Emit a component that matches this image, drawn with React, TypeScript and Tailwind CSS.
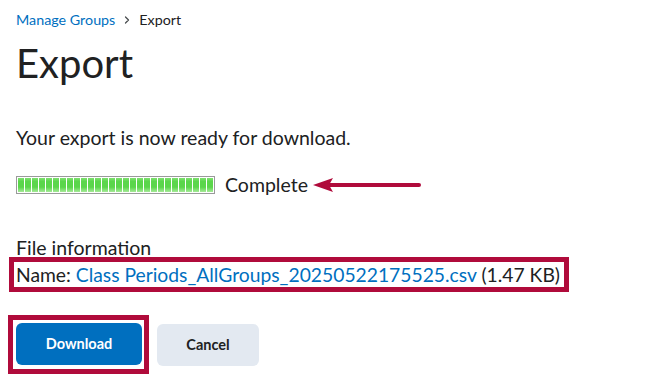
import { ChevronRight } from 'lucide-react';

const SEGMENTS = Array.from({ length: 28 });

function ProgressBar() {
  return (
    <div className="flex h-[18px] w-[199px] gap-[1px] border border-[#9a9a9a] bg-white p-[1px]">
      {SEGMENTS.map((_, i) => (
        <div
          key={i}
          className="h-full w-[6px] bg-[linear-gradient(#7fe070,#5bd64b_25%,#5bd64b_65%,#a6ea98)]"
        />
      ))}
    </div>
  );
}

function Arrow() {
  return (
    <svg width="110" height="16" viewBox="0 0 110 16" className="block">
      <line x1="14" y1="8" x2="106" y2="8" stroke="#b00b3b" strokeWidth="4" strokeLinecap="round" />
      <polygon points="0,8 20,1 16,8 20,15" fill="#b00b3b" />
    </svg>
  );
}

export default function App() {
  return (
    <div className="min-h-[390px] w-[656px] bg-white pl-4 font-['Lato',sans-serif] text-[#202122]">
      <nav className="flex items-center pt-[11px] text-[14.3px] leading-[18px]">
        <a className="text-[#006fbf]">Manage Groups</a>
        <ChevronRight className="mx-[6px] h-[12px] w-[12px] text-[#494c4e]" strokeWidth={2.5} />
        <span>Export</span>
      </nav>

      <h1 className="mt-[10px] text-[40px] leading-[48px] font-normal">Export</h1>

      <p className="mt-[39px] text-[19.5px] leading-[24px]">Your export is now ready for download.</p>

      <div className="mt-[23px] flex items-center">
        <ProgressBar />
        <span className="ml-[10px] text-[19.5px] leading-[24px]">Complete</span>
        <span className="ml-[5px]">
          <Arrow />
        </span>
      </div>

      <div className="mt-[39px] text-[19.5px] leading-[24px]">File information</div>
      <div className="-ml-[7px] -mt-[3px] inline-block border-[5px] border-[#b00b3b] pr-[4px] pl-[2px] text-[19.3px] leading-[25px]">
        Name: <a className="text-[#006fbf]">Class Periods_AllGroups_20250522175525.csv</a> (1.47 KB)
      </div>

      <div className="mt-[23px] flex items-center">
        <div className="-ml-[8px] border-[5px] border-[#b00b3b] pt-[3px] pr-[2px] pb-[4px] pl-[3px]">
          <button className="h-[42px] w-[126px] rounded-[6px] bg-[#006fbf] text-[14.5px] font-bold text-white">
            Download
          </button>
        </div>
        <button className="ml-[8px] h-[42px] w-[102px] rounded-[6px] bg-[#e3e9f1] text-[14.5px] font-bold text-[#202122]">
          Cancel
        </button>
      </div>
    </div>
  );
}
